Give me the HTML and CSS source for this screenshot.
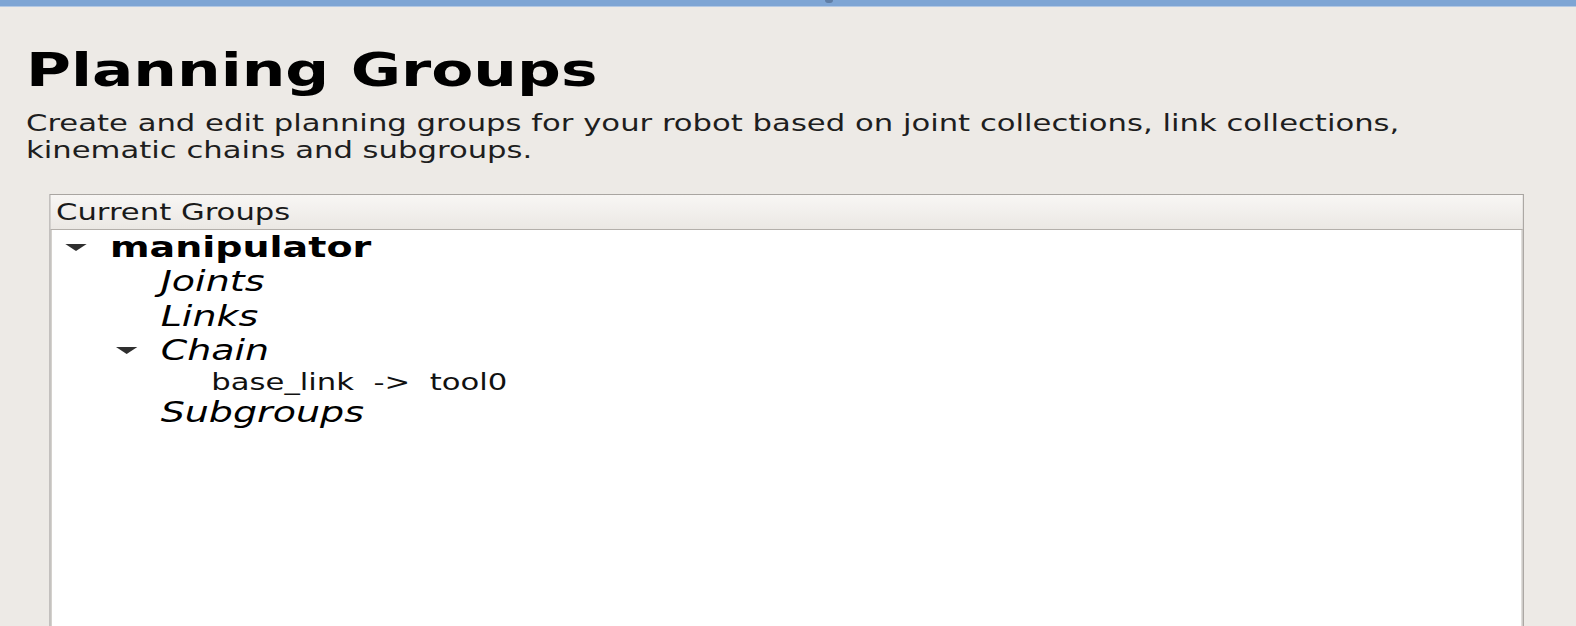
FILE: index.html
```html
<!DOCTYPE html>
<html lang="en">
<head>
<meta charset="utf-8">
<title>Planning Groups</title>
<link rel="stylesheet" href="styles.css">
</head>
<body>
<div class="top-bar"><span class="top-bar-knob"></span></div>
<div class="stage">
  <main class="page">
    <h1 class="title">Planning Groups</h1>
    <p class="desc">Create and edit planning groups for your robot based on joint collections, link collections, kinematic chains and subgroups.</p>
    <section class="groups">
      <div class="groups-header">Current Groups</div>
      <ul class="tree">
        <li class="row row-group lvl0"><span class="branch open"></span><span class="label">manipulator</span></li>
        <li class="row row-section lvl1"><span class="branch"></span><span class="label">Joints</span></li>
        <li class="row row-section lvl1"><span class="branch"></span><span class="label">Links</span></li>
        <li class="row row-section lvl1"><span class="branch open"></span><span class="label">Chain</span></li>
        <li class="row row-item lvl2"><span class="branch"></span><span class="label">base_link&nbsp; -&gt;&nbsp; tool0</span></li>
        <li class="row row-section lvl1"><span class="branch"></span><span class="label">Subgroups</span></li>
      </ul>
    </section>
  </main>
</div>
</body>
</html>
```

FILE: styles.css
```css
html, body {
  margin: 0;
  padding: 0;
  height: 626px;
  overflow: hidden;
  background: #edeae6;
  font-family: "DejaVu Sans", "Liberation Sans", sans-serif;
  color: #000;
}

.top-bar {
  height: 6px;
  background: #7ea5d4;
  border-bottom: 1px solid #b3c8e3;
  display: flex;
}

.top-bar-knob {
  width: 8px;
  height: 3px;
  margin-left: 825px;
  border-radius: 0 0 4px 4px;
  background: #5f7ea6;
}

.stage {
  width: 1182px;
  transform: scaleX(1.3333);
  transform-origin: 0 0;
}

.page {
  padding: 0 18px 0 19.5px;
}

.title {
  margin: 36px 0 0;
  font-size: 46px;
  line-height: 54px;
  font-weight: bold;
  color: #000;
}

.desc {
  margin: 13px 0 0;
  max-width: 1080px;
  font-size: 23px;
  line-height: 27px;
  color: #1e1e1e;
}

.groups {
  margin: 30px 21px 0 17.5px;
  height: 460px;
  border: 1px solid #a9a5a1;
  background: #fff;
  box-shadow: inset 1px 0 0 #d4d1cd, inset -1px 0 0 #d4d1cd;
  display: flex;
  flex-direction: column;
}

.groups-header {
  height: 34px;
  line-height: 34px;
  padding: 0 4px;
  font-size: 23px;
  color: #1a1a1a;
  background: linear-gradient(#f8f6f4, #ebe8e4);
  border-bottom: 1px solid #b3afaa;
}

.tree {
  list-style: none;
  margin: 0;
  padding: 0;
}

.row {
  display: flex;
  align-items: center;
  height: 34.5px;
}

.row-item {
  height: 27.5px;
}

.lvl0 { padding-left: 0; }
.lvl1 { padding-left: 38px; }
.lvl2 { padding-left: 76px; }

.branch {
  width: 38px;
  flex: none;
  display: flex;
  justify-content: center;
}

.branch.open::before {
  content: "";
  width: 0;
  height: 0;
  border-left: 8px solid transparent;
  border-right: 8px solid transparent;
  border-top: 7px solid #2f2f2f;
}

.label {
  padding-left: 6.5px;
  white-space: pre;
}

.row-group .label {
  font-size: 28.5px;
  font-weight: bold;
}

.row-section .label {
  font-size: 28.5px;
  font-style: italic;
}

.row-item .label {
  font-size: 23px;
  color: #111;
}
```
